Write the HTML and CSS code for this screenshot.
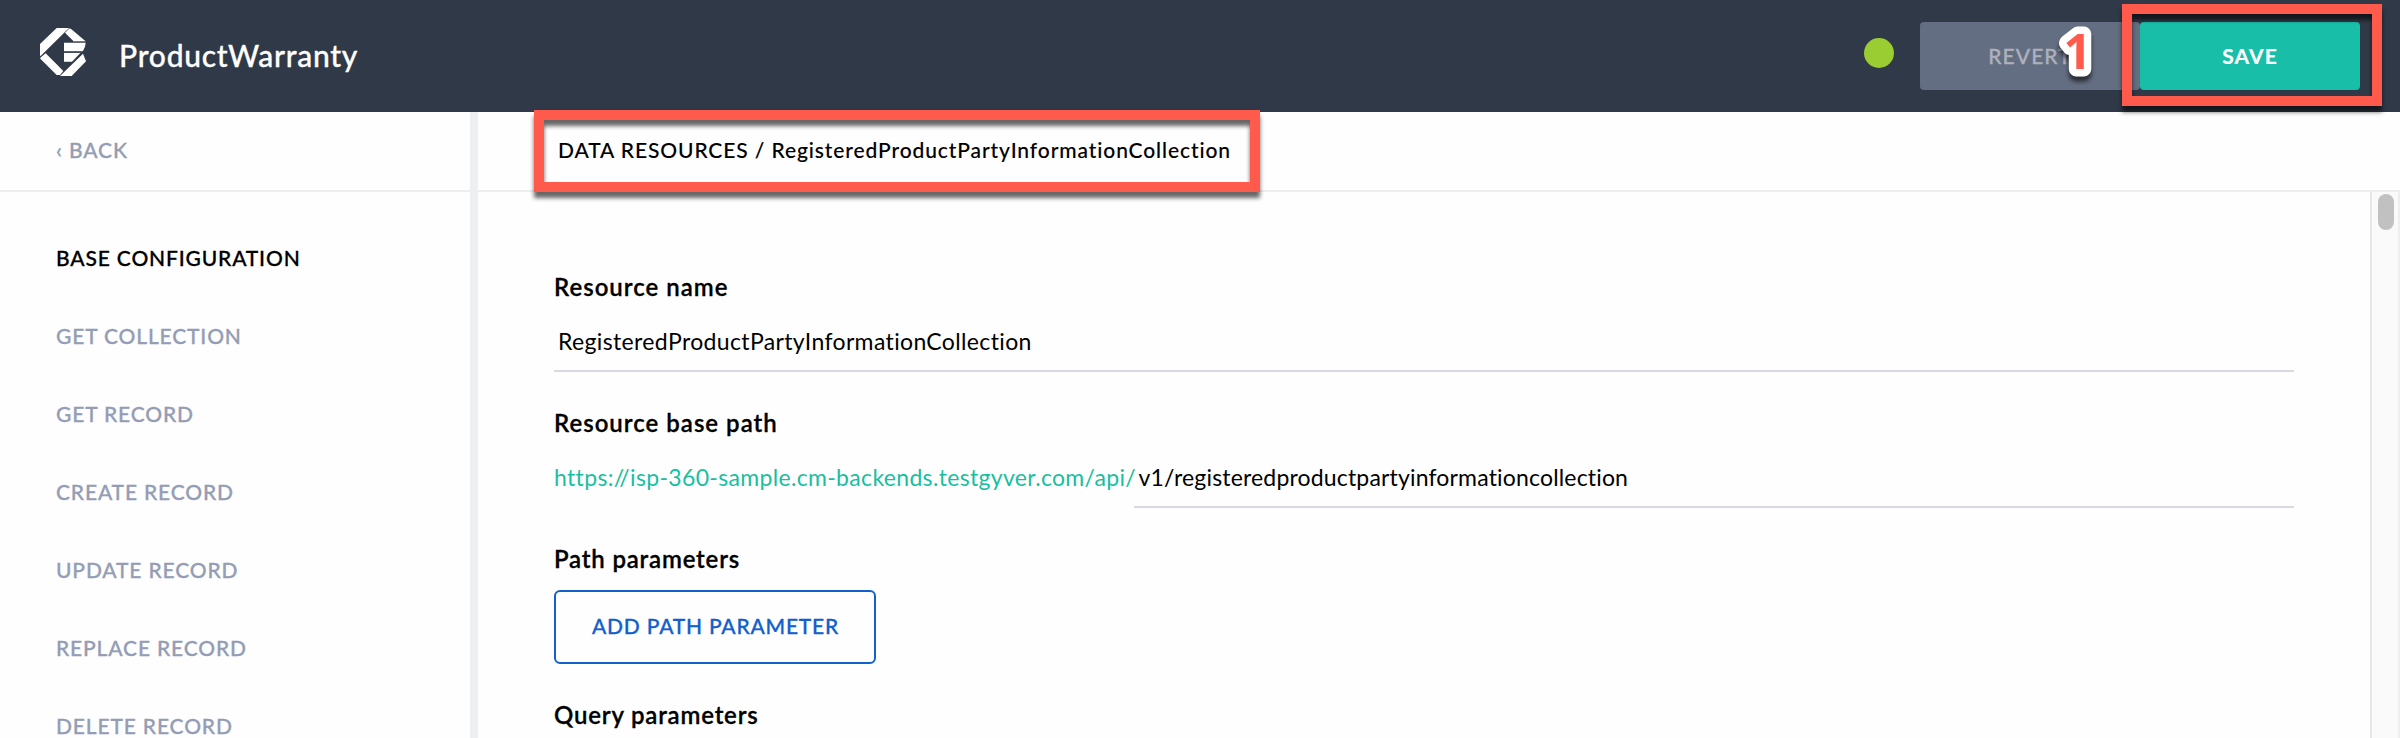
FILE: index.html
```html
<!DOCTYPE html>
<html lang="en">
<head>
<meta charset="utf-8">
<title>ProductWarranty</title>
<link rel="stylesheet" href="styles.css">
</head>
<body>
<div class="app">
  <header class="header">
    <svg class="logo" viewBox="120 84 138 144" width="46" height="48">
      <path d="M170 84H207L121 169L120 166V132Z"/>
      <path d="M207 86Q211 85 216 89L256 123H220L195 98Z"/>
      <path d="M192 128H257Q256 142 249 153H192Z"/>
      <path d="M192 159H241L216 185H192Z"/>
      <path d="M249 161L258 184L215 228H180Z"/>
      <path d="M137 160L190 213L180 225H170L121 176V173Z"/>
      <path class="logo-seam" d="M219 124.500H257M192 155.500H247"/>
    </svg>
    <h1 class="title">ProductWarranty</h1>
    <span class="status"></span>
    <button class="btn btn-revert">REVERT</button>
    <button class="btn btn-save">SAVE</button>
  </header>
  <div class="body">
    <aside class="sidebar">
      <a class="back"><span class="chevron">‹</span>BACK</a>
      <nav class="nav">
        <a class="nav-item active">BASE CONFIGURATION</a>
        <a class="nav-item">GET COLLECTION</a>
        <a class="nav-item">GET RECORD</a>
        <a class="nav-item">CREATE RECORD</a>
        <a class="nav-item">UPDATE RECORD</a>
        <a class="nav-item">REPLACE RECORD</a>
        <a class="nav-item">DELETE RECORD</a>
      </nav>
    </aside>
    <main class="main">
      <div class="breadcrumb">DATA RESOURCES / RegisteredProductPartyInformationCollection</div>
      <div class="panel">
        <div class="form">
          <label class="label">Resource name</label>
          <div class="row"><div class="input name">RegisteredProductPartyInformationCollection</div></div>
          <label class="label">Resource base path</label>
          <div class="row">
            <span class="prefix">https://isp-360-sample.cm-backends.testgyver.com/api/</span>
            <div class="input path">v1/registeredproductpartyinformationcollection</div>
          </div>
          <label class="label label-path">Path parameters</label>
          <button class="add">ADD PATH PARAMETER</button>
          <label class="label label-query">Query parameters</label>
        </div>
        <div class="scrollbar"><div class="thumb"></div></div>
      </div>
    </main>
  </div>
  <div class="highlight highlight-crumb"></div>
  <div class="highlight highlight-save"></div>
  <svg class="marker" width="60" height="90"><text x="13.500" y="59">1</text></svg>
</div>
</body>
</html>
```
FILE: styles.css
```css
* { box-sizing: border-box; }

body {
  margin: 0;
  background: #fefefe;
  color: #000;
  font-family: Lato, "Liberation Sans", sans-serif;
  overflow: hidden;
}

button { font-family: inherit; }

.app {
  position: relative;
  display: flex;
  flex-direction: column;
  height: 738px;
  overflow: hidden;
}

.header {
  display: flex;
  align-items: center;
  flex: none;
  height: 112px;
  padding: 0 40px;
  background: #303948;
}

.logo { fill: #fff; margin-bottom: 8px; }
.logo-seam { fill: none; stroke: #7c8496; stroke-width: 2.5; }

.title {
  margin: 0 auto 3px 33px;
  color: #fff;
  font-size: 30px;
  font-weight: 500;
  letter-spacing: 0.75px;
  -webkit-text-stroke: 0.3px;
}

.status {
  width: 30px;
  height: 30px;
  margin: 0 26px 6px 0;
  border-radius: 50%;
  background: #9acd32;
}

.btn {
  width: 220px;
  height: 68px;
  padding: 0 0 1px;
  border: 0;
  border-radius: 4px;
  font-size: 21px;
}

.btn-revert {
  background: #646e82;
  color: #adb1bb;
  font-weight: 500;
  letter-spacing: 1.1px;
  -webkit-text-stroke: 0.3px;
}

.btn-save {
  background: #19bea9;
  color: #fff;
  font-weight: 700;
  letter-spacing: 1.1px;
  -webkit-text-stroke: 0.2px;
}

.body { display: flex; flex: 1; min-height: 0; }

.sidebar {
  flex: none;
  width: 478px;
  border-right: 8px solid #eeeff2;
}

.back,
.breadcrumb {
  display: flex;
  align-items: center;
  height: 80px;
  padding-bottom: 4px;
  border-bottom: 2px solid #eeeeef;
  font-size: 21px;
  font-weight: 500;
  -webkit-text-stroke: 0.3px;
}

.back {
  padding-left: 56px;
  color: #949db5;
  letter-spacing: 0.9px;
}

.chevron { width: 13px; }

.nav { padding-top: 26px; }

.nav-item {
  display: flex;
  align-items: center;
  height: 78px;
  padding-left: 56px;
  color: #949db5;
  font-size: 21px;
  font-weight: 500;
  letter-spacing: 0.85px;
  -webkit-text-stroke: 0.3px;
}

.nav-item.active { color: #000; }

.main {
  display: flex;
  flex: 1;
  flex-direction: column;
  min-width: 0;
}

.breadcrumb {
  flex: none;
  padding-left: 80px;
  letter-spacing: 0.9px;
  -webkit-text-stroke: 0.1px;
}

.panel { display: flex; flex: 1; min-height: 0; }

.form {
  flex: 1;
  padding: 80px 76px 0;
}

.label {
  display: block;
  height: 30px;
  margin-bottom: 10px;
  font-size: 24px;
  font-weight: 600;
  line-height: 30px;
  letter-spacing: 1px;
  -webkit-text-stroke: 0.3px;
}

.row {
  display: flex;
  height: 60px;
  margin-bottom: 36px;
  font-size: 23px;
  line-height: 59px;
  white-space: nowrap;
}

.prefix {
  flex: none;
  width: 580px;
  color: #19bea1;
  letter-spacing: 0.33px;
}

.input {
  flex: 1;
  padding-left: 4px;
  border-bottom: 2px solid #d8d8de;
}

.name { letter-spacing: 0.36px; }
.path { padding-left: 4.5px; letter-spacing: 0.17px; }

.label-path,
.label-query { letter-spacing: 0.8px; }
.label-path { margin-bottom: 16px; }

.add {
  display: block;
  width: 322px;
  height: 74px;
  margin-bottom: 36px;
  padding: 0 0 3px 1px;
  border: 2px solid #1160cc;
  border-radius: 6px;
  background: none;
  color: #1160cc;
  font-size: 21px;
  font-weight: 500;
  letter-spacing: 0.78px;
  -webkit-text-stroke: 0.3px;
}

.scrollbar {
  width: 30px;
  padding: 2px 4px 0 6px;
  border-right: 2px solid #eee;
  border-left: 2px solid #e8e8e8;
  background: #fafafa;
}

.thumb {
  width: 16px;
  height: 36px;
  border-radius: 8px;
  background: #c1c1c1;
}

.highlight {
  position: absolute;
  border: 10px solid #ff5a4b;
  filter: drop-shadow(0 6px 2px rgba(0, 0, 0, 0.6));
}

.highlight-crumb { left: 534px; top: 110px; width: 726px; height: 82px; }
.highlight-save { left: 2122px; top: 4px; width: 260px; height: 102px; }

.marker {
  position: absolute;
  left: 2050px;
  top: 10px;
  fill: #ff5a4b;
  stroke: #fff;
  stroke-width: 15px;
  stroke-linejoin: round;
  paint-order: stroke;
  font: bold 49px "Open Sans", sans-serif;
  filter: drop-shadow(0 5px 2px rgba(0, 0, 0, 0.6));
}
```
